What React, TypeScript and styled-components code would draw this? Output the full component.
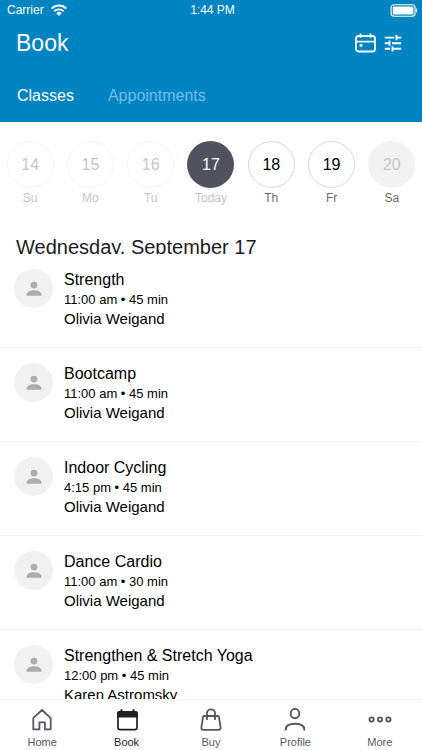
import React from "react";
import styled, { createGlobalStyle, css } from "styled-components";

const GlobalStyle = createGlobalStyle`
  *, *::before, *::after { box-sizing: border-box; }
  html, body { margin: 0; padding: 0; }
  body {
    background: #fff;
    color: #000;
    font-family: "Liberation Sans", Arial, Helvetica, sans-serif;
  }
  button { font-family: inherit; border: 0; padding: 0; margin: 0; background: none; cursor: pointer; }
  h1, h2, h3, p, ul { margin: 0; padding: 0; font-weight: 400; }
  ul { list-style: none; }
  svg { display: block; }
`;

const Screen = styled.div`
  height: 100vh;
  display: flex;
  flex-direction: column;
  overflow: hidden;
`;

const Header = styled.header`
  flex: none;
  background: #0083c1;
  color: #fff;
`;

const StatusBar = styled.div`
  display: grid;
  grid-template-columns: 1fr auto 1fr;
  align-items: center;
  height: 20px;
  padding: 0 4px 0 7px;
  font-size: 12px;
  line-height: 20px;
`;

const Carrier = styled.div`
  display: flex;
  align-items: center;
  gap: 7px;
`;

const BatterySlot = styled.div`
  justify-self: end;
`;

const TitleBar = styled.div`
  display: flex;
  align-items: center;
  justify-content: space-between;
  height: 46px;
  padding: 0 20px 0 16px;
`;

const Title = styled.h1`
  font-size: 23px;
  line-height: 28px;
`;

const Actions = styled.div`
  display: flex;
  align-items: center;
  gap: 8px;
`;

const IconButton = styled.button`
  color: #fff;
`;

const Tabs = styled.div`
  display: flex;
  gap: 34px;
  height: 56px;
  padding: 0 17px;
`;

const Tab = styled.button<{ $active?: boolean }>`
  height: 60px;
  color: ${(p) => (p.$active ? "#fff" : "#73c0e6")};
  font-size: 16px;
  line-height: 60px;
`;

const Week = styled.div`
  flex: none;
  display: grid;
  grid-template-columns: repeat(7, 1fr);
  padding-top: 19px;
`;

type DayState = "past" | "today" | "open" | "closed";

const dayCircle = {
  past: css`border: 1px solid #f5f5f5; color: #c6c6c6;`,
  today: css`background: #50535f; color: #fff;`,
  open: css`border: 1px solid #d8d8d8; color: #000;`,
  closed: css`background: #f2f2f2; color: #c6c6c6;`,
};

const Day = styled.button<{ $state: DayState }>`
  display: flex;
  flex-direction: column;
  align-items: center;
  gap: 2px;
  color: ${(p) => (p.$state === "open" || p.$state === "closed" ? "#6c6c6c" : "#c4c4c4")};
  font-size: 12px;
  line-height: 16px;
`;

const Circle = styled.span<{ $state: DayState }>`
  display: flex;
  align-items: center;
  justify-content: center;
  width: 47px;
  height: 47px;
  border-radius: 50%;
  font-size: 16px;
  ${(p) => dayCircle[p.$state]}
`;

const DateClip = styled.div`
  flex: none;
  height: 48px;
  padding: 28px 16px 0;
  overflow: hidden;
`;

const DateHeading = styled.h2`
  color: #1c1c1e;
  font-size: 20px;
  line-height: 26px;
`;

const ClassList = styled.ul`
  flex: 1;
  min-height: 0;
  overflow: hidden;
`;

const ClassRow = styled.li`
  display: flex;
  gap: 11px;
  height: 94px;
  padding: 15px 14px 0;
  border-bottom: 1px solid #f3f3f3;
`;

const Avatar = styled.div`
  flex: none;
  display: flex;
  align-items: center;
  justify-content: center;
  width: 39px;
  height: 39px;
  border-radius: 50%;
  background: #f1f1f1;
  color: #adadad;
`;

const ClassName = styled.h3`
  font-size: 16px;
  line-height: 22px;
`;

const ClassTime = styled.p`
  font-size: 13px;
  line-height: 18px;
`;

const Instructor = styled.p`
  font-size: 15px;
  line-height: 20px;
`;

const NavBar = styled.nav`
  flex: none;
  display: grid;
  grid-template-columns: repeat(5, 1fr);
  height: 51px;
  background: #fff;
  border-top: 1px solid #f3f3f3;
`;

const NavItem = styled.button<{ $active?: boolean }>`
  display: flex;
  flex-direction: column;
  align-items: center;
  gap: 4px;
  padding-top: 8px;
  color: ${(p) => (p.$active ? "#1f2026" : "#555763")};
  font-size: 11px;
  line-height: 14px;
`;

const WifiIcon = () => (
  <svg width="16" height="12" viewBox="0 0 16 12" fill="none" stroke="#fff" strokeWidth="1.9" aria-hidden="true">
    <path d="M.7 4.6a10.3 10.3 0 0 1 14.6 0" />
    <path d="M3.3 7.3a6.7 6.7 0 0 1 9.4 0" />
    <path d="M8 11.9 5.3 9.2a3.8 3.8 0 0 1 5.4 0z" fill="#fff" stroke="none" />
  </svg>
);

const BatteryIcon = () => (
  <svg width="28" height="13" viewBox="0 0 28 13" aria-hidden="true">
    <rect x="1.1" y=".7" width="24" height="11.6" rx="3" fill="none" stroke="#fff" strokeWidth="1.1" />
    <rect x="2.8" y="2.4" width="20.6" height="8.2" rx="1.2" fill="#fff" />
    <path d="M26 4.3c1.6.5 1.6 3.9 0 4.4z" fill="#fff" />
  </svg>
);

const CalendarIcon = () => (
  <svg width="21" height="20" viewBox="0 0 21 20" fill="none" stroke="currentColor" strokeWidth="1.8" aria-hidden="true">
    <rect x="1" y="3" width="19" height="15.5" rx="2.6" />
    <path d="M1 8.6h19M5.5.6v4.2M15.5.6v4.2" />
    <circle cx="6" cy="12.3" r="1.5" fill="currentColor" stroke="none" />
  </svg>
);

const TuneIcon = () => (
  <svg width="18" height="18" viewBox="0 0 18 18" fill="none" stroke="currentColor" strokeWidth="1.9" aria-hidden="true">
    <path d="M.8 3.6h9.4M12.5 3.6h4.7M12.5 1v5.2M.8 9.2h4.7M8 9.2h9.2M5.5 6.6v5.2M.8 14.8h5.4M8.5 14.8h8.7M8.5 12.2v5.2" />
  </svg>
);

const PersonIcon = () => (
  <svg width="16" height="16" viewBox="0 0 16 16" fill="currentColor" aria-hidden="true">
    <circle cx="8" cy="4.1" r="3.4" />
    <path d="M.6 14.8v-1.3c0-2.7 3.7-4.2 7.4-4.2s7.4 1.5 7.4 4.2v1.3z" />
  </svg>
);

const HomeIcon = () => (
  <svg width="24" height="23" viewBox="0 0 24 23" fill="none" stroke="currentColor" strokeWidth="1.8" strokeLinejoin="round" aria-hidden="true">
    <path d="M3.3 10.2 12 2l8.7 8.2v11.2h-5.8v-7H9.4v7H3.3z" />
  </svg>
);

const BookIcon = () => (
  <svg width="24" height="23" viewBox="0 0 24 23" aria-hidden="true">
    <rect x="3" y="3.9" width="19" height="17.8" rx="2.2" fill="none" stroke="currentColor" strokeWidth="1.7" />
    <path d="M2.1 9.4V5.2A2.2 2.2 0 0 1 4.3 3h1.2V1.2h2V3h10V1.2h2V3h1.2a2.2 2.2 0 0 1 2.2 2.2v4.2z" fill="currentColor" />
  </svg>
);

const BagIcon = () => (
  <svg width="24" height="23" viewBox="0 0 24 23" fill="none" stroke="currentColor" strokeWidth="1.8" strokeLinejoin="round" strokeLinecap="round" aria-hidden="true">
    <path d="M5.2 8h13.6a1.2 1.2 0 0 1 1.2 1l1.6 10.4a2 2 0 0 1-2 2.4H4.4a2 2 0 0 1-2-2.4L4 9a1.2 1.2 0 0 1 1.2-1z" />
    <path d="M8 11.2V5.3a4 4 0 0 1 8 0v5.9" />
  </svg>
);

const ProfileIcon = () => (
  <svg width="24" height="23" viewBox="0 0 24 23" fill="none" stroke="currentColor" strokeWidth="1.9" aria-hidden="true">
    <ellipse cx="12" cy="5.6" rx="4.3" ry="4.7" />
    <path d="M2.7 22.6v-1c0-3.8 3.2-5.9 9.3-5.9s9.3 2.1 9.3 5.9v1" />
  </svg>
);

const MoreIcon = () => (
  <svg width="24" height="23" viewBox="0 0 24 23" fill="none" stroke="currentColor" strokeWidth="1.9" aria-hidden="true">
    <circle cx="3.6" cy="11.5" r="2.1" />
    <circle cx="12" cy="11.5" r="2.1" />
    <circle cx="20.4" cy="11.5" r="2.1" />
  </svg>
);

const days: { num: number; label: string; state: DayState }[] = [
  { num: 14, label: "Su", state: "past" },
  { num: 15, label: "Mo", state: "past" },
  { num: 16, label: "Tu", state: "past" },
  { num: 17, label: "Today", state: "today" },
  { num: 18, label: "Th", state: "open" },
  { num: 19, label: "Fr", state: "open" },
  { num: 20, label: "Sa", state: "closed" },
];

const classes = [
  { name: "Strength", time: "11:00 am • 45 min", instructor: "Olivia Weigand" },
  { name: "Bootcamp", time: "11:00 am • 45 min", instructor: "Olivia Weigand" },
  { name: "Indoor Cycling", time: "4:15 pm • 45 min", instructor: "Olivia Weigand" },
  { name: "Dance Cardio", time: "11:00 am • 30 min", instructor: "Olivia Weigand" },
  { name: "Strengthen & Stretch Yoga", time: "12:00 pm • 45 min", instructor: "Karen Astromsky" },
];

const navItems = [
  { label: "Home", Icon: HomeIcon },
  { label: "Book", Icon: BookIcon },
  { label: "Buy", Icon: BagIcon },
  { label: "Profile", Icon: ProfileIcon },
  { label: "More", Icon: MoreIcon },
];

export default function App() {
  return (
    <Screen>
      <GlobalStyle />
      <Header>
        <StatusBar>
          <Carrier>
            Carrier
            <WifiIcon />
          </Carrier>
          <span>1:44 PM</span>
          <BatterySlot>
            <BatteryIcon />
          </BatterySlot>
        </StatusBar>
        <TitleBar>
          <Title>Book</Title>
          <Actions>
            <IconButton type="button" aria-label="Calendar">
              <CalendarIcon />
            </IconButton>
            <IconButton type="button" aria-label="Filters">
              <TuneIcon />
            </IconButton>
          </Actions>
        </TitleBar>
        <Tabs role="tablist">
          <Tab type="button" role="tab" aria-selected="true" $active>
            Classes
          </Tab>
          <Tab type="button" role="tab" aria-selected="false">
            Appointments
          </Tab>
        </Tabs>
      </Header>
      <Week>
        {days.map((d) => (
          <Day key={d.num} type="button" $state={d.state}>
            <Circle $state={d.state}>{d.num}</Circle>
            {d.label}
          </Day>
        ))}
      </Week>
      <DateClip>
        <DateHeading>Wednesday, September 17</DateHeading>
      </DateClip>
      <ClassList>
        {classes.map((c) => (
          <ClassRow key={c.name}>
            <Avatar>
              <PersonIcon />
            </Avatar>
            <div>
              <ClassName>{c.name}</ClassName>
              <ClassTime>{c.time}</ClassTime>
              <Instructor>{c.instructor}</Instructor>
            </div>
          </ClassRow>
        ))}
      </ClassList>
      <NavBar>
        {navItems.map(({ label, Icon }) => (
          <NavItem key={label} type="button" $active={label === "Book"}>
            <Icon />
            {label}
          </NavItem>
        ))}
      </NavBar>
    </Screen>
  );
}
